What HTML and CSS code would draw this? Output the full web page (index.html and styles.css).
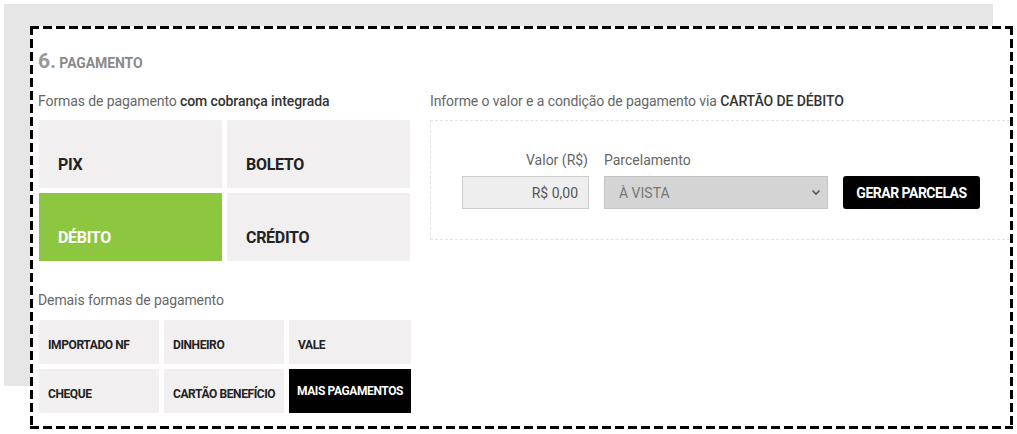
FILE: index.html
```html
<!DOCTYPE html>
<html lang="pt-BR">
<head>
    <meta charset="UTF-8">
    <meta name="viewport" content="width=device-width, initial-scale=1.0">
    <title>Pagamento</title>
    <link rel="stylesheet" href="styles.css">
</head>
<body>
    <div class="panel">
        <section class="card">
            <h2 class="section-title"><span class="num">6.</span> PAGAMENTO</h2>

            <div class="columns">
                <div class="col-left">
                    <p class="hint">Formas de pagamento <strong>com cobrança integrada</strong></p>
                    <div class="main-methods">
                        <button class="method">PIX</button>
                        <button class="method">BOLETO</button>
                        <button class="method active">DÉBITO</button>
                        <button class="method">CRÉDITO</button>
                    </div>

                    <p class="hint other-hint">Demais formas de pagamento</p>
                    <div class="other-methods">
                        <button class="small-method">IMPORTADO NF</button>
                        <button class="small-method">DINHEIRO</button>
                        <button class="small-method">VALE</button>
                        <button class="small-method">CHEQUE</button>
                        <button class="small-method">CARTÃO BENEFÍCIO</button>
                        <button class="small-method more">MAIS PAGAMENTOS</button>
                    </div>
                </div>

                <div class="col-right">
                    <p class="hint">Informe o valor e a condição de pagamento via <strong>CARTÃO DE DÉBITO</strong></p>
                    <div class="value-box">
                        <div class="field field-value">
                            <label for="valor">Valor (R$)</label>
                            <input id="valor" class="input-value" type="text" value="R$ 0,00" readonly>
                        </div>
                        <div class="field field-parcel">
                            <label for="parcelas">Parcelamento</label>
                            <div class="select-wrap">
                                <select id="parcelas" class="select-parcel" disabled>
                                    <option>À VISTA</option>
                                </select>
                                <svg class="chevron" width="10" height="7" viewBox="0 0 10 7">
                                    <path d="M1.5 1.5 L5 5 L8.5 1.5" fill="none" stroke="#555" stroke-width="1.6"/>
                                </svg>
                            </div>
                        </div>
                        <button class="gen-btn">GERAR PARCELAS</button>
                    </div>
                </div>
            </div>
        </section>
    </div>
</body>
</html>
```

FILE: styles.css
```css
* {
    margin: 0;
    padding: 0;
    box-sizing: border-box;
}

html, body {
    height: 100%;
}

body {
    font-family: Roboto, 'Liberation Sans', sans-serif;
    background: #fff;
    padding: 4px;
    min-height: 434px;
}

.panel {
    width: 989px;
    height: 382px;
    background: #e6e6e6;
    padding: 22px 0 0 26px;
}

/* dashed frame drawn with gradients, longer dashes than the native border */
.card {
    width: 983px;
    height: 403px;
    padding: 23px 0 0 8px;
    background:
        repeating-linear-gradient(90deg, #000 0 9px, transparent 9px 13px) top left / 100% 3px no-repeat,
        repeating-linear-gradient(90deg, #000 0 9px, transparent 9px 13px) bottom left / 100% 3px no-repeat,
        repeating-linear-gradient(180deg, #000 0 9px, transparent 9px 13px) top left / 3px 100% no-repeat,
        repeating-linear-gradient(180deg, #000 0 9px, transparent 9px 13px) top right / 3px 100% no-repeat,
        #fff;
}

.section-title {
    font-size: 14px;
    font-weight: bold;
    color: #8a8a8a;
    line-height: 24px;
    letter-spacing: -0.1px;
}

.section-title .num {
    font-size: 21px;
    color: #999;
}

.columns {
    display: flex;
    gap: 19px;
    margin-top: 17px;
}

.col-left {
    width: 373px;
}

.col-right {
    flex: 1;
    padding-right: 3px;
}

.hint {
    font-size: 14px;
    line-height: 18px;
    color: #666;
    letter-spacing: -0.1px;
}

.hint strong {
    color: #333;
    font-weight: 500;
}

.main-methods {
    display: grid;
    grid-template-columns: 183px 183px;
    grid-auto-rows: 68px;
    gap: 5px;
    margin: 10px 0 0 1px;
}

button {
    border: none;
    font-family: inherit;
    cursor: pointer;
}

.method {
    background: #f1efef;
    color: #222;
    font-size: 16px;
    font-weight: bold;
    text-align: left;
    padding: 20px 0 0 19px;
    letter-spacing: -0.3px;
}

.method.active {
    background: #8dc63f;
    color: #fff;
}

.other-hint {
    margin-top: 30px;
}

.other-methods {
    display: grid;
    grid-template-columns: 120px 120px 122px;
    grid-auto-rows: 44px;
    gap: 5px;
    margin: 11px 0 0 1px;
}

.small-method {
    background: #f1efef;
    color: #222;
    font-size: 12px;
    font-weight: bold;
    text-align: left;
    padding: 6px 0 0 9px;
    letter-spacing: -0.4px;
    white-space: nowrap;
}

.small-method.more {
    background: #000;
    color: #fff;
    padding-left: 8px;
    padding-top: 0;
}

.value-box {
    margin-top: 10px;
    height: 120px;
    border: 1px dashed #e2e2e2;
    border-right: none;
    display: flex;
    align-items: flex-end;
    gap: 15px;
    padding: 0 0 30px 31px;
}

.field {
    display: flex;
    flex-direction: column;
    gap: 8px;
}

.field label {
    font-size: 14px;
    line-height: 16px;
    color: #666;
}

.field-value label {
    text-align: right;
    padding-right: 1px;
}

.input-value {
    width: 127px;
    height: 33px;
    background: #eee;
    border: 1px solid #ccc;
    font-family: inherit;
    font-size: 14px;
    color: #555;
    text-align: right;
    padding-right: 10px;
    outline: none;
}

.select-wrap {
    position: relative;
}

.select-parcel {
    appearance: none;
    width: 224px;
    height: 33px;
    background: #d4d4d4;
    border: 1px solid #c4c4c4;
    font-family: inherit;
    font-size: 14px;
    color: #777;
    padding-left: 14px;
    opacity: 1;
}

.chevron {
    position: absolute;
    right: 7px;
    top: 13px;
}

.gen-btn {
    width: 137px;
    height: 33px;
    background: #000;
    color: #fff;
    font-size: 14px;
    font-weight: bold;
    border-radius: 3px;
    letter-spacing: -0.5px;
}
```
